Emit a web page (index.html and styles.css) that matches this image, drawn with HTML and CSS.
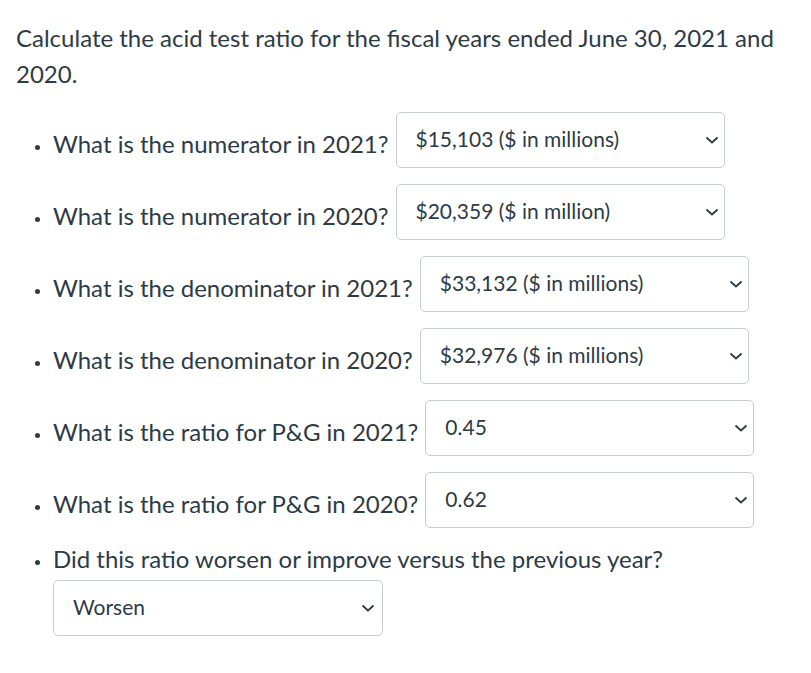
FILE: index.html
```html
<!DOCTYPE html>
<html lang="en">
<head>
<meta charset="utf-8">
<title>Acid test ratio</title>
<link rel="stylesheet" href="styles.css">
</head>
<body>
<div class="question">
  <p class="prompt">Calculate the acid test ratio for the fiscal years ended June 30, 2021 and 2020.</p>
  <ul class="items">
    <li class="row">
      <span class="label"><span class="dot"></span>What is the numerator in 2021?</span>
      <div class="select"><span class="val">$15,103 ($ in millions)</span><svg class="chev" width="14" height="8" viewBox="0 0 14 8"><path d="M1.5 1.5 L7 6.5 L12.5 1.5" fill="none" stroke="#2d3b45" stroke-width="1.8"/></svg></div>
    </li>
    <li class="row">
      <span class="label"><span class="dot"></span>What is the numerator in 2020?</span>
      <div class="select"><span class="val">$20,359 ($ in million)</span><svg class="chev" width="14" height="8" viewBox="0 0 14 8"><path d="M1.5 1.5 L7 6.5 L12.5 1.5" fill="none" stroke="#2d3b45" stroke-width="1.8"/></svg></div>
    </li>
    <li class="row">
      <span class="label"><span class="dot"></span>What is the denominator in 2021?</span>
      <div class="select"><span class="val">$33,132 ($ in millions)</span><svg class="chev" width="14" height="8" viewBox="0 0 14 8"><path d="M1.5 1.5 L7 6.5 L12.5 1.5" fill="none" stroke="#2d3b45" stroke-width="1.8"/></svg></div>
    </li>
    <li class="row">
      <span class="label"><span class="dot"></span>What is the denominator in 2020?</span>
      <div class="select"><span class="val">$32,976 ($ in millions)</span><svg class="chev" width="14" height="8" viewBox="0 0 14 8"><path d="M1.5 1.5 L7 6.5 L12.5 1.5" fill="none" stroke="#2d3b45" stroke-width="1.8"/></svg></div>
    </li>
    <li class="row">
      <span class="label"><span class="dot"></span>What is the ratio for P&amp;G in 2021?</span>
      <div class="select"><span class="val">0.45</span><svg class="chev" width="14" height="8" viewBox="0 0 14 8"><path d="M1.5 1.5 L7 6.5 L12.5 1.5" fill="none" stroke="#2d3b45" stroke-width="1.8"/></svg></div>
    </li>
    <li class="row last-row">
      <span class="label"><span class="dot"></span>What is the ratio for P&amp;G in 2020?</span>
      <div class="select"><span class="val">0.62</span><svg class="chev" width="14" height="8" viewBox="0 0 14 8"><path d="M1.5 1.5 L7 6.5 L12.5 1.5" fill="none" stroke="#2d3b45" stroke-width="1.8"/></svg></div>
    </li>
    <li class="stack">
      <span class="label"><span class="dot"></span>Did this ratio worsen or improve versus the previous year?</span>
      <div class="select select-below"><span class="val">Worsen</span><svg class="chev" width="14" height="8" viewBox="0 0 14 8"><path d="M1.5 1.5 L7 6.5 L12.5 1.5" fill="none" stroke="#2d3b45" stroke-width="1.8"/></svg></div>
    </li>
  </ul>
</div>
</body>
</html>
```
FILE: styles.css
```css
html, body {
  margin: 0;
  padding: 0;
  background: #ffffff;
}

body {
  font-family: Lato, "Open Sans", sans-serif;
  color: #2d3b45;
}

.question {
  padding: 20px 16px 0 16px;
}

.prompt {
  margin: 0;
  font-size: 24px;
  line-height: 36px;
}

.items {
  list-style: none;
  margin: 20px 0 0 0;
  padding: 0 0 0 19px;
}

.row {
  display: flex;
  align-items: flex-start;
  gap: 7px;
  margin-bottom: 16px;
}

.row.last-row {
  margin-bottom: 13px;
}

.label {
  display: flex;
  align-items: center;
  font-size: 24px;
  line-height: 36px;
  height: 36px;
  margin-top: 14px;
  white-space: nowrap;
}

.dot {
  width: 5px;
  height: 5px;
  border-radius: 50%;
  background: #2d3b45;
  margin: 6px 13px 0 0;
  flex: none;
}

.select {
  box-sizing: border-box;
  width: 329px;
  height: 56px;
  border: 1px solid #c7cdd1;
  border-radius: 5px;
  background: #ffffff;
  display: flex;
  align-items: center;
  justify-content: space-between;
  padding: 0 5px 2px 19px;
  font-size: 21px;
}

.val {
  line-height: 26px;
}

.chev {
  display: block;
  margin-top: 2px;
}

.stack .label {
  margin-top: 0;
}

.select-below {
  width: 330px;
  margin: 3px 0 0 18px;
  padding-right: 7px;
}
```
